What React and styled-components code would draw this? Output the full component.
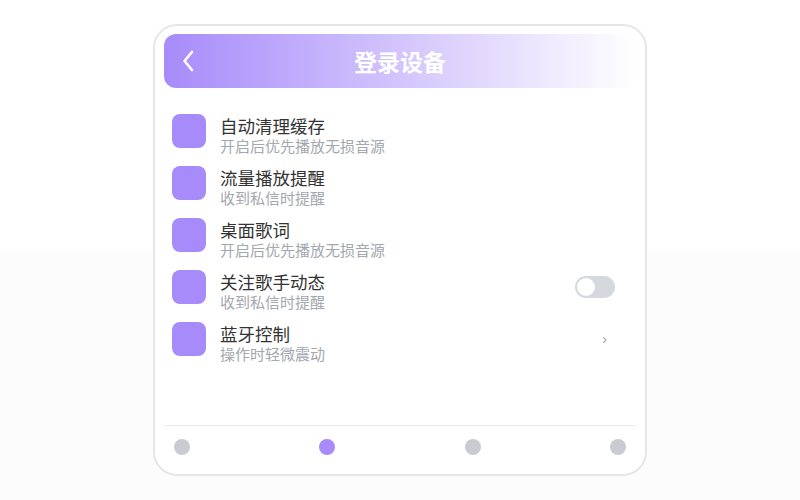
import React, { useState } from "react";
import styled, { createGlobalStyle } from "styled-components";

const GlobalStyle = createGlobalStyle`
  html, body {
    margin: 0;
    padding: 0;
  }
  body {
    min-height: 500px;
    background: linear-gradient(180deg, #ffffff 0 250px, #fcfcfd 250px);
    font-family: "Liberation Sans", "Noto Sans CJK SC", sans-serif;
  }
`;

const Page = styled.div`
  display: flex;
  justify-content: center;
  padding-top: 24px;
`;

const Card = styled.div`
  width: 494px;
  height: 452px;
  box-sizing: border-box;
  border: 2px solid #e6e6ea;
  border-radius: 24px;
  background: #fff;
  padding: 8px 9px 0;
  display: flex;
  flex-direction: column;
`;

const Header = styled.div`
  height: 54px;
  border-radius: 12px;
  background: linear-gradient(90deg, #a78bfa 0%, #ffffff 100%);
  display: flex;
  align-items: center;
  padding: 0 16px;
`;

const BackButton = styled.button`
  border: none;
  background: none;
  padding: 0;
  width: 16px;
  height: 24px;
  display: flex;
  align-items: center;
  justify-content: center;
  cursor: pointer;
`;

const Title = styled.h1`
  flex: 1;
  margin: 0 16px 0 0;
  text-align: center;
  color: #fff;
  font-family: "Noto Sans CJK SC", sans-serif;
  font-size: 23px;
  font-weight: 700;
  line-height: 30px;
`;

const List = styled.div`
  display: flex;
  flex-direction: column;
  gap: 10px;
  padding: 26px 21px 0 8px;
  flex: 1;
`;

const Row = styled.div`
  display: flex;
  align-items: flex-start;
`;

const IconBox = styled.div`
  width: 34px;
  height: 34px;
  border-radius: 8px;
  background: #a78bfa;
  flex-shrink: 0;
`;

const Texts = styled.div`
  flex: 1;
  margin-left: 14px;
  padding-top: 2px;
  display: flex;
  flex-direction: column;
`;

const ItemTitle = styled.div`
  font-size: 17.5px;
  line-height: 22px;
  color: #333;
`;

const ItemSub = styled.div`
  font-size: 15px;
  line-height: 18px;
  color: #a3a7ae;
`;

const Switch = styled.button`
  width: 40px;
  height: 22px;
  margin-top: 6px;
  border: none;
  border-radius: 11px;
  padding: 2px;
  background: ${(p) => (p.on ? "#a78bfa" : "#d5d8de")};
  display: flex;
  justify-content: ${(p) => (p.on ? "flex-end" : "flex-start")};
  cursor: pointer;
`;

const Knob = styled.span`
  width: 18px;
  height: 18px;
  border-radius: 50%;
  background: #fff;
`;

const Arrow = styled.span`
  font-size: 14px;
  line-height: 34px;
  color: #9ca3af;
  margin-right: 8px;
`;

const Footer = styled.div`
  border-top: 1px solid #ececf0;
  display: flex;
  justify-content: space-between;
  padding: 13px 10px 19px;
`;

const Dot = styled.span`
  width: 16px;
  height: 16px;
  border-radius: 50%;
  background: ${(p) => (p.active ? "#a78bfa" : "#c8ccd2")};
`;

const items = [
  { title: "自动清理缓存", sub: "开启后优先播放无损音源" },
  { title: "流量播放提醒", sub: "收到私信时提醒" },
  { title: "桌面歌词", sub: "开启后优先播放无损音源" },
  { title: "关注歌手动态", sub: "收到私信时提醒", right: "switch" },
  { title: "蓝牙控制", sub: "操作时轻微震动", right: "arrow" },
];

const App = () => {
  const [on, setOn] = useState(false);
  const [tab, setTab] = useState(1);

  return (
    <Page>
      <GlobalStyle />
      <Card>
        <Header>
          <BackButton aria-label="返回">
            <svg width="12" height="22" viewBox="0 0 12 22" fill="none">
              <path
                d="M10 2 L2.5 11 L10 20"
                stroke="#fff"
                strokeWidth="2.6"
                strokeLinecap="round"
                strokeLinejoin="round"
              />
            </svg>
          </BackButton>
          <Title>登录设备</Title>
        </Header>

        <List>
          {items.map((item) => (
            <Row key={item.title}>
              <IconBox />
              <Texts>
                <ItemTitle>{item.title}</ItemTitle>
                <ItemSub>{item.sub}</ItemSub>
              </Texts>
              {item.right === "switch" && (
                <Switch on={on} onClick={() => setOn(!on)}>
                  <Knob />
                </Switch>
              )}
              {item.right === "arrow" && <Arrow>›</Arrow>}
            </Row>
          ))}
        </List>

        <Footer>
          {[0, 1, 2, 3].map((i) => (
            <Dot key={i} active={tab === i} onClick={() => setTab(i)} />
          ))}
        </Footer>
      </Card>
    </Page>
  );
};

export default App;
